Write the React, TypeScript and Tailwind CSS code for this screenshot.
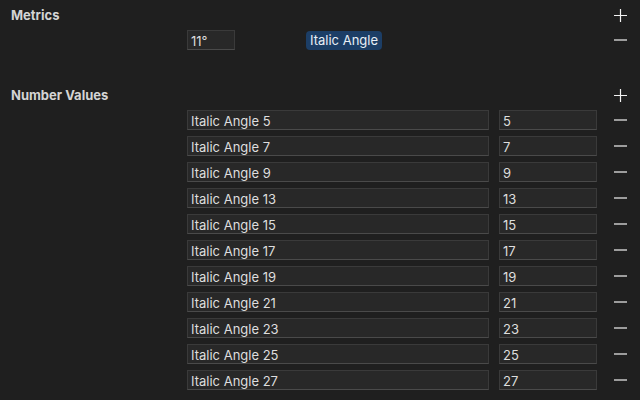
const numberValues = [5, 7, 9, 13, 15, 17, 19, 21, 23, 25, 27]

function PlusIcon() {
  return (
    <svg width="13" height="13" viewBox="0 0 13 13" className="text-[#f2f2f2]">
      <path d="M0 6.5H13M6.5 0V13" stroke="currentColor" strokeWidth="1.2" />
    </svg>
  )
}

function MinusIcon() {
  return (
    <svg width="13" height="13" viewBox="0 0 13 13" className="text-[#f2f2f2]">
      <path d="M0 6H13" stroke="currentColor" strokeWidth="1.2" />
    </svg>
  )
}

function Field({ value, className }: { value: string; className: string }) {
  return (
    <div
      className={`h-[20px] flex items-center pl-[3px] pt-[2px] bg-[#282828] border border-[#3a3a3a] border-b-[#4a4a4a] text-[13px] text-[#dedede] leading-none ${className}`}
    >
      {value}
    </div>
  )
}

function SectionHeader({ title }: { title: string }) {
  return (
    <div className="h-[30px] flex items-center justify-between pl-[11px] pr-[13px]">
      <span className="text-[13px] font-bold text-[#d4d4d4] pt-[1px]">{title}</span>
      <PlusIcon />
    </div>
  )
}

export default function App() {
  return (
    <div
      className="w-[640px] h-[400px] bg-[#1f1f1f] overflow-hidden"
      style={{ fontFamily: 'Inter, "Noto Sans", sans-serif' }}
    >
      {/* Metrics */}
      <SectionHeader title="Metrics" />
      <div className="h-[20px] flex items-center pr-[13px]">
        <div className="w-[187px]" />
        <Field value="11°" className="w-[48px]" />
        <div className="ml-[71px] h-[19px] mt-[1px] px-[4px] pt-[1px] flex items-center rounded-[4px] bg-[#1c3e66] text-[13px] text-[#e8eef5]">
          Italic Angle
        </div>
        <div className="flex-1" />
        <MinusIcon />
      </div>

      {/* Number Values */}
      <div className="h-[30px]" />
      <SectionHeader title="Number Values" />
      <div className="flex flex-col gap-[6px]">
        {numberValues.map(n => (
          <div key={n} className="h-[20px] flex items-center pr-[13px]">
            <div className="w-[187px]" />
            <Field value={`Italic Angle ${n}`} className="w-[302px]" />
            <Field value={String(n)} className="ml-[10px] w-[98px]" />
            <div className="flex-1" />
            <MinusIcon />
          </div>
        ))}
      </div>
    </div>
  )
}
